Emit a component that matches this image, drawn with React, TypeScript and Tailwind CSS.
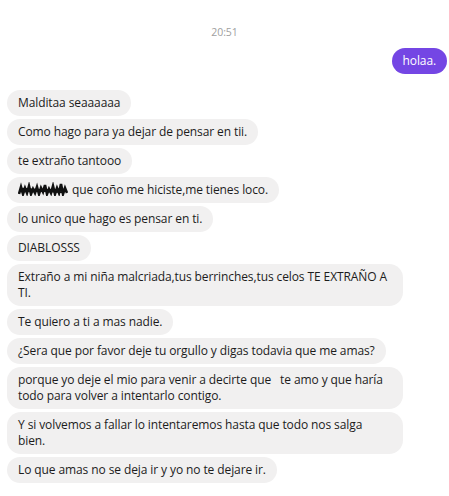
import React from "react";

const msgs: string[] = [
  "Malditaa seaaaaaa",
  "Como hago para ya dejar de pensar en tii.",
  "te extraño tantooo",
  "__SCRIBBLE__ que coño me hiciste,me tienes loco.",
  "lo unico que hago es pensar en ti.",
  "DIABLOSSS",
  "Extraño a mi niña malcriada,tus berrinches,tus celos TE EXTRAÑO A TI.",
  "Te quiero a ti a mas nadie.",
  "¿Sera que por favor deje tu orgullo y digas todavia que me amas?",
  "porque yo deje el mio para venir a decirte que \u00a0 te amo y que haría todo para volver a intentarlo contigo.",
  "Y si volvemos a fallar lo intentaremos hasta que todo nos salga bien.",
  "Lo que amas no se deja ir y yo no te dejare ir.",
];

function Scribble() {
  return (
    <svg width="50" height="14" viewBox="0 0 50 14" className="inline-block align-[-2px] mr-[4px]">
      <path
        d="M1 12 L3 5 L5 12 L7 6 L9 11 L11 4 L13 12 L15 7 L17 11 L19 5 L21 12 L23 6 L25 10 L27 3 L29 12 L31 7 L33 11 L35 4 L37 12 L39 6 L41 11 L43 2 L45 12 L47 6 L49 11"
        stroke="#111"
        strokeWidth="2.6"
        fill="none"
      />
      <path d="M2 9 L48 8 M4 7 L46 10" stroke="#111" strokeWidth="2.5" fill="none" />
    </svg>
  );
}

export default function App() {
  return (
    <div
      className="w-[449px] h-[496px] bg-white overflow-hidden text-[#1c1c1c] tracking-[-0.1px]"
      style={{ fontFamily: '"Open Sans", "Noto Sans", sans-serif' }}
    >
      <div className="pt-[25px] text-center text-[10.5px] text-[#a0a0a0] leading-[14px]">20:51</div>
      <div className="flex justify-end pr-[2px] mt-[9px]">
        <div className="bg-[#7446e4] text-white text-[12px] leading-[16px] px-[11px] py-[5px] rounded-full">
          holaa.
        </div>
      </div>
      <div className="flex flex-col items-start gap-[3px] pl-[7px] mt-[16px]">
        {msgs.map((m, i) => (
          <div
            key={i}
            className="bg-[#f1f0f0] text-[12px] leading-[16px] px-[11px] py-[5px] rounded-[14px] max-w-[396px]"
          >
            {m.startsWith("__SCRIBBLE__") ? (
              <>
                <Scribble />
                {m.replace("__SCRIBBLE__ ", "")}
              </>
            ) : (
              m
            )}
          </div>
        ))}
      </div>
    </div>
  );
}
